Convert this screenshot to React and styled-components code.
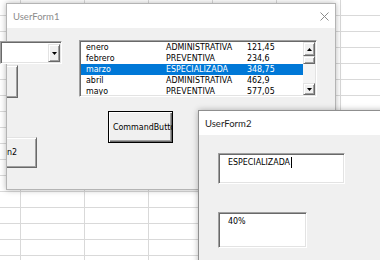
import React from 'react'
import styled, { createGlobalStyle } from 'styled-components'

const GlobalStyle = createGlobalStyle`
  html, body {
    margin: 0;
    padding: 0;
  }
  body {
    width: 380px;
    height: 260px;
    overflow: hidden;
    background: #fff;
  }
`

const Sheet = styled.div`
  position: relative;
  width: 380px;
  height: 260px;
  overflow: hidden;
  background-color: #fff;
  background-image:
    linear-gradient(to right, #d9d9d9 1px, transparent 1px),
    linear-gradient(to bottom, #d9d9d9 1px, transparent 1px);
  background-size: 64px 16px;
  background-position: 20px 15px;
  font-family: "DejaVu Sans Condensed", "DejaVu Sans", sans-serif;
  font-size: 8.8px;
  color: #000;
`

const Window = styled.div`
  position: absolute;
  left: ${p => p.$left}px;
  top: ${p => p.$top}px;
  width: ${p => p.$width}px;
  height: ${p => p.$height}px;
  box-sizing: border-box;
  display: flex;
  flex-direction: column;
  background: #f0f0f0;
  border: 1px solid ${p => (p.$active ? '#8f8f8f' : '#b4b4b4')};
  box-shadow: 0 0 6px rgba(0, 0, 0, 0.28);
`

const TitleBar = styled.div`
  flex-shrink: 0;
  height: 24px;
  display: flex;
  align-items: center;
  justify-content: space-between;
  padding: 0 6px;
  background: #fff;
  font-family: Lato, "Noto Sans", sans-serif;
  font-size: 9.5px;
  color: ${p => (p.$active ? '#1e1e1e' : '#8c8c8c')};
`

const Body = styled.div`
  flex: 1;
  min-height: 0;
  display: flex;
  flex-direction: ${p => p.$direction || 'row'};
  align-items: flex-start;
`

const Column = styled.div`
  display: flex;
  flex-direction: column;
  align-items: flex-start;
  flex-shrink: 0;
  width: ${p => (p.$width ? `${p.$width}px` : 'auto')};
  margin: ${p => p.$margin || '0'};
`

const sunken = `
  box-sizing: border-box;
  background: #fff;
  border: 1px solid;
  border-color: #a0a0a0 #fff #fff #a0a0a0;
  box-shadow: inset 1px 1px #696969, inset -1px -1px #e3e3e3;
`

const raised = `
  box-sizing: border-box;
  background: #f0f0f0;
  border: 1px solid;
  border-color: #e3e3e3 #696969 #696969 #e3e3e3;
  box-shadow: inset 1px 1px #fff, inset -1px -1px #a0a0a0;
`

const Combo = styled.div`
  ${sunken}
  width: 62px;
  height: 23px;
  margin-top: 13px;
  padding: 2px 1px 1px 2px;
  display: flex;
  justify-content: flex-end;
`

const ArrowButton = styled.div`
  ${raised}
  width: ${p => p.$width || 12}px;
  height: ${p => (p.$height ? `${p.$height}px` : '100%')};
  flex-shrink: 0;
  display: flex;
  align-items: center;
  justify-content: center;
`

const Clip = styled.div`
  width: ${p => p.$width}px;
  height: ${p => p.$height}px;
  margin-top: ${p => p.$gap}px;
  margin-left: 7px;
  overflow: hidden;
  display: flex;
  justify-content: flex-end;
`

const Button = styled.button`
  box-sizing: border-box;
  flex-shrink: 0;
  width: ${p => p.$width}px;
  height: ${p => (p.$height ? `${p.$height}px` : '100%')};
  margin: ${p => p.$margin || '0'};
  padding: 0 4px 1px;
  display: flex;
  align-items: center;
  justify-content: ${p => (p.$left ? 'flex-start' : 'center')};
  overflow: hidden;
  white-space: nowrap;
  font: inherit;
  color: #000;
  background: #f0f0f0;
  border: 1px solid;
  border-color: ${p => (p.$default ? '#000' : '#e3e3e3 #696969 #696969 #e3e3e3')};
  box-shadow: ${p =>
    p.$default
      ? 'inset 1px 1px #fff, inset -1px -1px #696969, inset -2px -2px #a0a0a0'
      : 'inset 1px 1px #fff, inset -1px -1px #a0a0a0'};
`

const ListBox = styled.div`
  ${sunken}
  width: 238px;
  height: 57px;
  padding: 1px;
  display: flex;
`

const Rows = styled.div`
  flex: 1;
  overflow: hidden;
`

const Row = styled.div`
  display: grid;
  grid-template-columns: 80px 81px 1fr;
  height: 11px;
  line-height: 11px;
  padding-left: 5px;
  white-space: nowrap;
  background: ${p => (p.$selected ? '#0078d7' : 'transparent')};
  color: ${p => (p.$selected ? '#fff' : '#000')};
`

const ScrollBar = styled.div`
  width: 12px;
  display: flex;
  flex-direction: column;
  background: #f4f4f4;
`

const Track = styled.div`
  flex: 1;
`

const Thumb = styled.div`
  ${raised}
  height: 8px;
`

const TextBox = styled.div`
  ${sunken}
  width: ${p => p.$width}px;
  height: ${p => p.$height}px;
  margin: ${p => p.$gap}px 0 0 19px;
  padding: 3px 0 0 9px;
  line-height: 11px;
  white-space: nowrap;
`

const Caret = styled.span`
  display: inline-block;
  width: 1px;
  height: 11px;
  margin-left: 1px;
  vertical-align: top;
  background: #000;
`

const Arrow = ({ up }) => (
  <svg width="5" height="3" viewBox="0 0 5 3">
    <polygon points={up ? '2.5,0 5,3 0,3' : '0,0 5,0 2.5,3'} fill="#000" />
  </svg>
)

const CloseIcon = () => (
  <svg width="9" height="9" viewBox="0 0 9 9">
    <path d="M0.5 0.5 L8.5 8.5 M8.5 0.5 L0.5 8.5" stroke="#8c8c8c" strokeWidth="1" fill="none" />
  </svg>
)

const rows = [
  { mes: 'enero', tipo: 'ADMINISTRATIVA', monto: '121,45' },
  { mes: 'febrero', tipo: 'PREVENTIVA', monto: '234,6' },
  { mes: 'marzo', tipo: 'ESPECIALIZADA', monto: '348,75', selected: true },
  { mes: 'abril', tipo: 'ADMINISTRATIVA', monto: '462,9' },
  { mes: 'mayo', tipo: 'PREVENTIVA', monto: '577,05' }
]

export default function App() {
  return (
    <Sheet>
      <GlobalStyle />

      <Window $left={6} $top={3} $width={330} $height={187}>
        <TitleBar>
          <span>UserForm1</span>
          <CloseIcon />
        </TitleBar>
        <Body>
          <Column $width={62} $margin="0 0 0 -7px">
            <Combo>
              <ArrowButton>
                <Arrow />
              </ArrowButton>
            </Combo>
            <Clip $width={11} $height={33} $gap={1}>
              <Button $width={112}>CommandButton3</Button>
            </Clip>
            <Clip $width={30} $height={31} $gap={39}>
              <Button $width={112}>CommandButton2</Button>
            </Clip>
          </Column>

          <Column $margin="12px 0 0 17px">
            <ListBox>
              <Rows>
                {rows.map(r => (
                  <Row key={r.mes} $selected={r.selected}>
                    <span>{r.mes}</span>
                    <span>{r.tipo}</span>
                    <span>{r.monto}</span>
                  </Row>
                ))}
              </Rows>
              <ScrollBar>
                <ArrowButton $height={14}>
                  <Arrow up />
                </ArrowButton>
                <Thumb />
                <Track />
                <ArrowButton $height={12}>
                  <Arrow />
                </ArrowButton>
              </ScrollBar>
            </ListBox>
            <Button $default $left $width={65} $height={32} $margin="14px 0 0 29px">
              CommandButton1
            </Button>
          </Column>
        </Body>
      </Window>

      <Window $active $left={198} $top={110} $width={200} $height={170}>
        <TitleBar $active>
          <span>UserForm2</span>
        </TitleBar>
        <Body $direction="column">
          <TextBox $width={127} $height={31} $gap={18}>
            ESPECIALIZADA
            <Caret />
          </TextBox>
          <TextBox $width={89} $height={36} $gap={28}>
            40%
          </TextBox>
        </Body>
      </Window>
    </Sheet>
  )
}
